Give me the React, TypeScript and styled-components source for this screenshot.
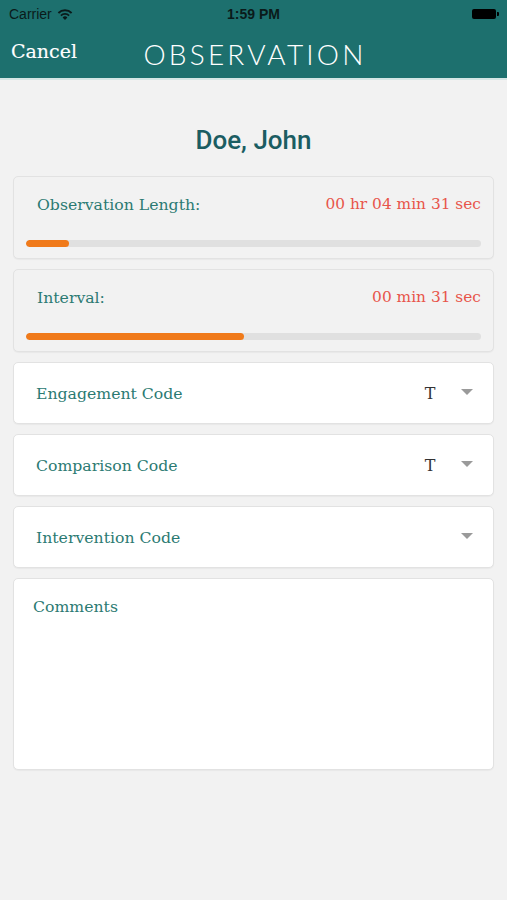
import styled, { createGlobalStyle } from 'styled-components';

const GlobalStyle = createGlobalStyle`
  html, body {
    margin: 0;
    padding: 0;
    background: #f2f2f2;
  }
`;

const Page = styled.div`
  width: 507px;
  min-height: 900px;
  background: #f2f2f2;
  font-family: 'DejaVu Serif', serif;
`;

const Header = styled.div`
  background: #1d706e;
  height: 78px;
  border-bottom: 2px solid #d5e6e5;
  display: flex;
  flex-direction: column;
`;

const StatusBar = styled.div`
  height: 27px;
  display: grid;
  grid-template-columns: 1fr auto 1fr;
  align-items: center;
  padding: 0 9px;
  font-family: 'Liberation Sans', Arial, sans-serif;
  font-size: 14px;
  color: #0a1a1a;
`;

const Carrier = styled.div`
  display: flex;
  align-items: center;
  gap: 5px;
`;

const Clock = styled.div`
  font-weight: bold;
  font-size: 14px;
`;

const Battery = styled.div`
  justify-self: end;
  width: 24px;
  height: 10px;
  background: #000;
  border-radius: 2px;
  position: relative;
  margin-right: 2px;
  &::after {
    content: '';
    position: absolute;
    right: -3px;
    top: 3px;
    width: 2px;
    height: 4px;
    background: #000;
    border-radius: 0 1px 1px 0;
  }
`;

const NavBar = styled.div`
  flex: 1;
  position: relative;
  display: flex;
  align-items: center;
  justify-content: center;
`;

const Cancel = styled.div`
  position: absolute;
  left: 11px;
  top: 13px;
  color: #ffffff;
  font-family: 'DejaVu Serif', serif;
  font-size: 19px;
  -webkit-text-stroke: 0.15px #ffffff;
`;

const Title = styled.div`
  color: #ffffff;
  font-family: Lato, sans-serif;
  font-weight: 300;
  font-size: 28px;
  letter-spacing: 3.2px;
  margin-top: 2px;
  margin-left: 3px;
`;

const Name = styled.div`
  text-align: center;
  font-family: Roboto, sans-serif;
  font-weight: 500;
  font-size: 26px;
  color: #1b5d62;
  padding-top: 45px;
  height: 51px;
`;

const List = styled.div`
  display: flex;
  flex-direction: column;
  gap: 10px;
  padding: 0 13px;
`;

const Card = styled.div<{ $white?: boolean; $height: number }>`
  height: ${(p) => p.$height}px;
  box-sizing: border-box;
  background: ${(p) => (p.$white ? '#ffffff' : '#f2f2f2')};
  border: 1px solid #e2e2e2;
  border-radius: 5px;
  box-shadow: 0 1px 1px rgba(0, 0, 0, 0.04);
`;

const TimerCard = styled(Card)`
  display: flex;
  flex-direction: column;
  padding: 16px 12px 0 12px;
`;

const TimerRow = styled.div`
  display: flex;
  justify-content: space-between;
  align-items: center;
  padding-left: 11px;
  height: 22px;
`;

const Label = styled.div`
  color: #2b7a72;
  font-size: 15.7px;
`;

const TimeValue = styled.div`
  color: #e8554a;
  font-size: 15.4px;
`;

const Track = styled.div`
  margin-top: 25px;
  height: 7px;
  border-radius: 4px;
  background: #e0e0e0;
  overflow: hidden;
`;

const Fill = styled.div`
  height: 100%;
  background: #f07a1a;
  border-radius: 4px;
`;

const CodeCard = styled(Card)`
  display: flex;
  align-items: center;
  padding: 0 20px 0 22px;
`;

const CodeLabel = styled(Label)`
  flex: 1;
`;

const CodeValue = styled.div`
  width: 20px;
  text-align: center;
  color: #333;
  font-size: 16px;
  margin-right: 21px;
`;

const Caret = styled.div`
  width: 0;
  height: 0;
  border-left: 6px solid transparent;
  border-right: 6px solid transparent;
  border-top: 6px solid #9a9a9a;
  margin-top: -2px;
`;

const CommentsCard = styled(Card)`
  padding: 18px 19px;
`;

function Wifi() {
  return (
    <svg width="16" height="12" viewBox="0 0 16 12">
      <path d="M8 12 L5.6 9.4 A3.4 3.4 0 0 1 10.4 9.4 Z" fill="#0a1a1a" />
      <path d="M3.9 7.6 A5.9 5.9 0 0 1 12.1 7.6" stroke="#0a1a1a" strokeWidth="1.8" fill="none" />
      <path d="M1.4 5 A9.3 9.3 0 0 1 14.6 5" stroke="#0a1a1a" strokeWidth="1.8" fill="none" />
    </svg>
  );
}

function Timer({ label, value, percent }: { label: string; value: string; percent: number }) {
  return (
    <TimerCard $height={83}>
      <TimerRow>
        <Label>{label}</Label>
        <TimeValue>{value}</TimeValue>
      </TimerRow>
      <Track>
        <Fill style={{ width: `${percent}%` }} />
      </Track>
    </TimerCard>
  );
}

function CodeSelect({ label, value }: { label: string; value?: string }) {
  return (
    <CodeCard $white $height={62}>
      <CodeLabel>{label}</CodeLabel>
      <CodeValue>{value}</CodeValue>
      <Caret />
    </CodeCard>
  );
}

export default function App() {
  return (
    <Page>
      <GlobalStyle />
      <Header>
        <StatusBar>
          <Carrier>
            Carrier <Wifi />
          </Carrier>
          <Clock>1:59 PM</Clock>
          <Battery />
        </StatusBar>
        <NavBar>
          <Cancel>Cancel</Cancel>
          <Title>OBSERVATION</Title>
        </NavBar>
      </Header>
      <Name>Doe, John</Name>
      <List>
        <Timer label="Observation Length:" value="00 hr 04 min 31 sec" percent={9.5} />
        <Timer label="Interval:" value="00 min 31 sec" percent={48} />
        <CodeSelect label="Engagement Code" value="T" />
        <CodeSelect label="Comparison Code" value="T" />
        <CodeSelect label="Intervention Code" />
        <CommentsCard $white $height={192}>
          <Label>Comments</Label>
        </CommentsCard>
      </List>
    </Page>
  );
}
